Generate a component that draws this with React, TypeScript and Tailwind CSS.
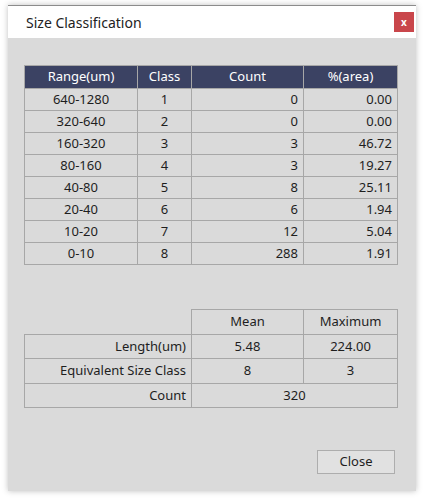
const rows = [
  { range: "640-1280", cls: 1, count: 0, area: "0.00" },
  { range: "320-640", cls: 2, count: 0, area: "0.00" },
  { range: "160-320", cls: 3, count: 3, area: "46.72" },
  { range: "80-160", cls: 4, count: 3, area: "19.27" },
  { range: "40-80", cls: 5, count: 8, area: "25.11" },
  { range: "20-40", cls: 6, count: 6, area: "1.94" },
  { range: "10-20", cls: 7, count: 12, area: "5.04" },
  { range: "0-10", cls: 8, count: 288, area: "1.91" },
];

const cell = "border border-[#a7a7a7] px-[5px] p-0";

export default function App() {
  return (
    <div
      className="w-[424px] h-[500px] bg-white pt-[5px] pl-[8px] text-[13px] text-[#1e1e1e]"
      style={{ fontFamily: '"Noto Sans", "Noto Sans CJK KR", sans-serif' }}
    >
      <div className="w-[408px] h-[486px] flex flex-col border-t border-[#8c8c8c] bg-[#dadada] shadow-[0_0_6px_rgba(0,0,0,0.25)]">
        {/* Title bar */}
        <div className="h-[32px] bg-white flex items-center justify-between pl-[18px] pr-[2px]">
          <span className="text-[14px] text-[#222]">Size Classification</span>
          <button className="w-[20px] h-[20px] bg-[#c9464b] text-white text-[10px] font-bold leading-none flex items-center justify-center">
            x
          </button>
        </div>

        {/* Body */}
        <div className="flex flex-col pl-[16px] pt-[27px]">
          <table className="w-[373px] table-fixed border-collapse border border-[#a0a0a0]">
            <colgroup>
              <col className="w-[113px]" />
              <col className="w-[54px]" />
              <col className="w-[112px]" />
              <col className="w-[94px]" />
            </colgroup>
            <thead>
              <tr className="h-[23px] bg-[#3b4263] text-white">
                <th className={`${cell} font-normal text-center`}>Range(um)</th>
                <th className={`${cell} font-normal text-center`}>Class</th>
                <th className={`${cell} font-normal text-center`}>Count</th>
                <th className={`${cell} font-normal text-center`}>%(area)</th>
              </tr>
            </thead>
            <tbody>
              {rows.map((r) => (
                <tr key={r.range} className="h-[22px]">
                  <td className={`${cell} text-center`}>{r.range}</td>
                  <td className={`${cell} text-center`}>{r.cls}</td>
                  <td className={`${cell} text-right`}>{r.count}</td>
                  <td className={`${cell} text-right`}>{r.area}</td>
                </tr>
              ))}
            </tbody>
          </table>

          <table className="mt-[44px] w-[373px] table-fixed border-collapse">
            <colgroup>
              <col className="w-[167px]" />
              <col className="w-[112px]" />
              <col className="w-[94px]" />
            </colgroup>
            <tbody>
              <tr className="h-[25px]">
                <td className="p-0"></td>
                <td className={`${cell} text-center`}>Mean</td>
                <td className={`${cell} text-center`}>Maximum</td>
              </tr>
              <tr className="h-[24px]">
                <td className={`${cell} text-right`}>Length(um)</td>
                <td className={`${cell} text-center`}>5.48</td>
                <td className={`${cell} text-center`}>224.00</td>
              </tr>
              <tr className="h-[25px]">
                <td className={`${cell} text-right`}>Equivalent Size Class</td>
                <td className={`${cell} text-center`}>8</td>
                <td className={`${cell} text-center`}>3</td>
              </tr>
              <tr className="h-[24px]">
                <td className={`${cell} text-right`}>Count</td>
                <td className={`${cell} text-center`} colSpan={2}>320</td>
              </tr>
            </tbody>
          </table>

          <div className="mt-[42px] flex justify-end pr-[21px]">
            <button className="w-[78px] h-[24px] bg-[#e1e1e1] border border-[#adadad] text-[13px] text-[#1e1e1e]">
              Close
            </button>
          </div>
        </div>
      </div>
    </div>
  );
}
